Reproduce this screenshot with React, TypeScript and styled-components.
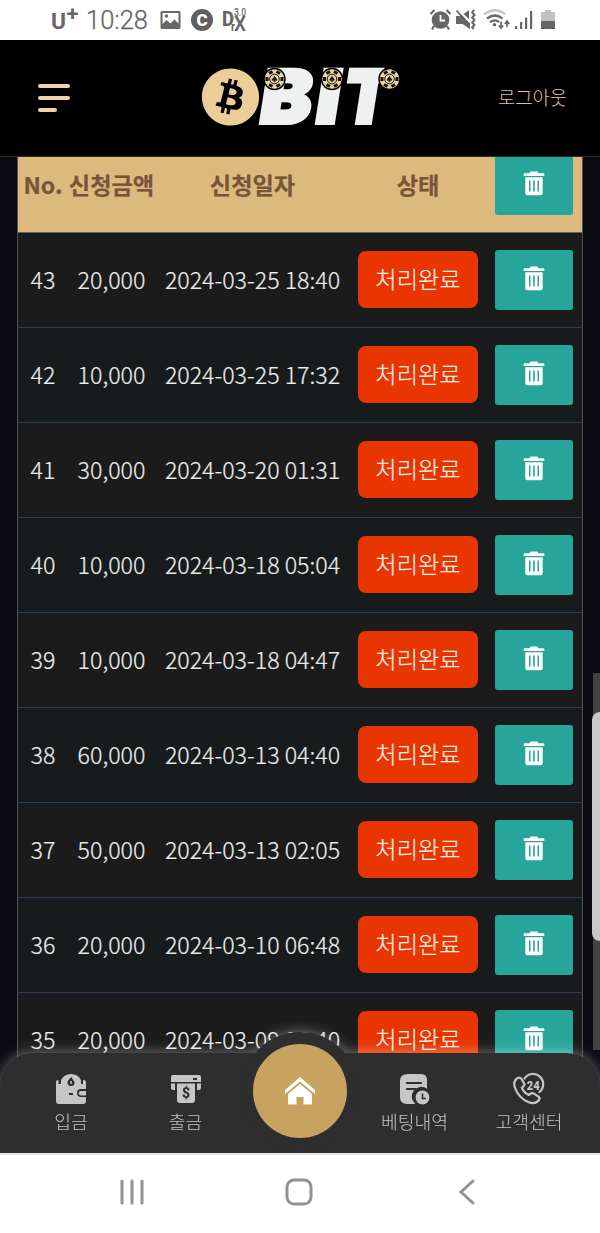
import React from 'react';
import styled, { createGlobalStyle } from 'styled-components';
import { FaBitcoin } from 'react-icons/fa';

const GlobalStyle = createGlobalStyle`
  * { box-sizing: border-box; }
  body { margin: 0; background: #fff; font-family: "Noto Sans CJK KR", "Noto Sans", sans-serif; }
  button { font: inherit; border: 0; padding: 0; background: none; color: inherit; }
  svg { display: block; flex: none; overflow: visible; }
`;

const Phone = styled.div`
  width: 600px;
  height: 1233px;
  display: flex;
  flex-direction: column;
  overflow: hidden;
`;

const StatusBar = styled.div`
  height: 40px;
  flex: none;
  display: flex;
  justify-content: space-between;
  padding: 0 44px 0 51px;
  color: #666;
`;

const StatusGroup = styled.div`
  display: flex;
  align-items: center;
`;

const Clock = styled.span`
  font: 300 25.5px/40px Roboto, sans-serif;
  -webkit-text-stroke: 0.3px #666;
  width: 74px;
`;

const Header = styled.header`
  height: 116px;
  flex: none;
  display: grid;
  grid-template-columns: 202px 198px 1fr;
  align-items: center;
  background: #000;
`;

const MenuButton = styled.button`
  padding-left: 37.5px;
  display: flex;
  flex-direction: column;
  gap: 8px;
`;

const MenuLine = styled.span<{ $w: number }>`
  width: ${p => p.$w}px;
  height: 4px;
  border-radius: 2px;
  background: #ecd3a8;
`;

const Logout = styled.button`
  justify-self: end;
  padding: 0 33px 3px 0;
  font-size: 18.8px;
  font-weight: 300;
  color: #ddc59c;
`;

const Viewport = styled.main`
  height: 997px;
  flex: none;
  position: relative;
  overflow: hidden;
  background: #0b0a11;
  border-top: 1px solid #302b22;
`;

const Table = styled.div`
  margin: -19px 17px 0;
  width: 566px;
  border: solid #505154;
  border-width: 0 1px 0 1px;
`;

const Row = styled.div<{ $kind: 'head' | 'odd' | 'even' }>`
  height: 95px;
  display: grid;
  grid-template-columns: 50px 87px 195px 136px 96px;
  align-items: center;
  justify-items: center;
  white-space: nowrap;
  border-bottom: 1px solid ${p => (p.$kind === 'head' ? '#67635a' : '#2c3c55')};
  background: ${p => ({ head: '#dcb97d', odd: '#1b1b1b', even: '#171b1c' }[p.$kind])};
  color: ${p => (p.$kind === 'head' ? '#79543a' : '#ececec')};
  font-size: 23.2px;
  font-weight: ${p => (p.$kind === 'head' ? 700 : 300)};
`;

const Cell = styled.span`
  line-height: 32px;
  padding-bottom: 2px;
  -webkit-text-stroke: 0.2px currentColor;
`;

const Status = styled.span`
  width: 120px;
  height: 57px;
  border-radius: 8px;
  background: #e93500;
  color: #fff0e8;
  -webkit-text-stroke: 0.2px currentColor;
  line-height: 54px;
  text-align: center;
  margin-bottom: 1px;
`;

const DeleteButton = styled.button`
  width: 78px;
  height: 60px;
  border-radius: 3px;
  background: #27a59a;
  color: #fff;
  display: flex;
  align-items: center;
  justify-content: center;
  padding-bottom: 3px;
`;

const ScrollTrack = styled.div`
  position: absolute;
  right: 0;
  top: 516px;
  width: 7px;
  height: 377px;
  background: #424242;
`;

const ScrollThumb = styled.div`
  position: absolute;
  left: -1px;
  top: 39px;
  width: 16px;
  height: 229px;
  border-radius: 8px;
  background: #c9c9c9;
`;

const BottomNav = styled.nav`
  position: absolute;
  left: 0;
  right: 0;
  bottom: 0;
  height: 100px;
  border-radius: 34px 34px 0 0;
  background: #2e2e2e;
  display: grid;
  grid-template-columns: 142px 87px 142px 87px 142px;
  filter: drop-shadow(0 0 7px rgba(255, 255, 255, 0.42));
`;

const NavItem = styled.button`
  display: flex;
  flex-direction: column;
  align-items: center;
  padding-top: 20px;
  width: 100px;
  justify-self: center;
  color: #c6c6c6;
  font-size: 18.2px;
  font-weight: 300;
  line-height: 31px;
`;

const HomeRing = styled.div`
  width: 118px;
  height: 118px;
  margin-top: -21px;
  justify-self: center;
  border-radius: 50%;
  background: #2e2e2e;
  display: grid;
  place-items: center;
`;

const HomeButton = styled.button`
  width: 94px;
  height: 94px;
  margin-bottom: 1px;
  border-radius: 50%;
  background: #c8a25f;
  display: grid;
  place-items: center;
`;

const SystemNav = styled.div`
  height: 80px;
  flex: none;
  border-top: 2px solid #e4e4e4;
  background: #fff;
  display: grid;
  grid-template-columns: 131px 204px 131px;
  justify-content: start;
  justify-items: center;
  align-items: center;
  padding: 0 0 4px 66px;
`;

const CarrierMark = () => (
  <svg width="35" height="28" viewBox="0 0 35 28" fill="#666">
    <text x="0" y="22.5" fontFamily="Roboto, sans-serif" fontSize="22.5" fontWeight="700" textLength="15" lengthAdjust="spacingAndGlyphs">U</text>
    <text x="15.5" y="15" fontFamily="Roboto, sans-serif" fontSize="21" fontWeight="700" textLength="12" lengthAdjust="spacingAndGlyphs">+</text>
  </svg>
);

const Trash = () => (
  <svg width="22" height="25" viewBox="0 0 22 25" fill="currentColor">
    <path d="M8 .6h6q1 0 1 1v.7h5.500q.8 0 .8.8v2H.7v-2q0-.8.8-.8H7v-.7q0-1 1-1Z" />
    <path fillRule="evenodd" d="M2.300 6.300h17.400v15.900q0 2-2 2H4.300q-2 0-2-2ZM6 9.500v11h1.500v-11Zm4.200 0v11h1.600v-11Zm4.300 0v11H16v-11Z" />
  </svg>
);

const notches = [0, 60, 120, 180, 240, 300];

const Chip = ({ x }: { x: number }) => (
  <g transform={`translate(${x} 13)`}>
    <circle r="11.2" fill="#000" />
    <circle r="9.8" fill="#ecd3a8" />
    {notches.map(angle => (
      <path key={angle} d="M-2-9h4v3h-4Z" fill="#17130d" transform={`rotate(${angle + 30})`} />
    ))}
    <circle r="4.8" fill="none" stroke="#17130d" strokeWidth="1" />
    <path d="M0-3 2.700.5Q2.700 2.200.6 1.600L1.200 2.800h-2.400l.6-1.200Q-2.700 2.200-2.700.5Z" fill="#17130d" />
  </g>
);

const CoinFace = styled(FaBitcoin)`
  color: #ebcd98;
`;

const Logo = () => (
  <svg width="198" height="64" viewBox="0 0 198 64">
    <CoinFace x={-1} y={1.5} size={59} />
    <g fill="#eff1f1" stroke="#eff1f1" strokeWidth="4" fontFamily="Inter, sans-serif" fontWeight="900" fontSize="73">
      <text transform="translate(55.5 57) skewX(-9)" textLength="51" lengthAdjust="spacingAndGlyphs">B</text>
      <text transform="translate(111.5 57) skewX(-9)" textLength="23" lengthAdjust="spacingAndGlyphs">I</text>
      <g clipPath="url(#tee)">
        <text transform="translate(138.5 57) skewX(-9)" textLength="46" lengthAdjust="spacingAndGlyphs">T</text>
      </g>
    </g>
    <clipPath id="tee"><path d="M140-4h43.500l-11 68h-33Z" /></clipPath>
    <Chip x={72.5} />
    <Chip x={130} />
    <Chip x={187.5} />
  </svg>
);

const WalletIcon = () => (
  <svg width="32" height="33" viewBox="0 0 32 33">
    <path fill="currentColor" d="M1 9q0-2 2.500-2v4H6V7Q9 1 16 1t10 6v4h2V7q3 0 3 2v7h-5q-4 0-4 4t4 4h5v4q0 3-3 3H4q-3 0-3-3Z" />
    <path fill="currentColor" d="M26 18h5v4.500h-5a2.200 2.200 0 0 1 0-4.500Z" />
    <path d="M16.500 4q-4 3-4 5.500a3.500 3.500 0 0 0 7 0Q19.500 8 18 7Z" fill="#2e2e2e" />
    <path d="M16 8v3" stroke="currentColor" strokeWidth="1.500" />
    <path d="M14 21h4" stroke="#2e2e2e" strokeWidth="2" />
  </svg>
);

const WithdrawIcon = () => (
  <svg width="32" height="33" viewBox="0 0 32 33">
    <path fill="currentColor" fillRule="evenodd" d="M3 2h26q2 0 2 2v5H1V4q0-2 2-2Zm20 3v2h4V5Z" />
    <path fill="currentColor" d="M1 10.500h4V17H3q-2 0-2-2Zm26 0h4V15q0 2-2 2h-2ZM7 10.500h18V27q0 3-3 3H10q-3 0-3-3Z" />
    <text x="16" y="24.5" textAnchor="middle" fill="#2e2e2e" fontFamily="Roboto, sans-serif" fontSize="14" fontWeight="800">$</text>
  </svg>
);

const HistoryIcon = () => (
  <svg width="32" height="33" viewBox="0 0 32 33">
    <path fill="currentColor" d="M9 1h13q6 0 6 6v8.800A8.600 8.600 0 0 0 16.500 31H8q-7 0-7-7V8q0-7 8-7Z" />
    <path d="M8 10h14M8 16h8.500" stroke="#2e2e2e" strokeWidth="2.200" strokeLinecap="round" />
    <circle cx="23.5" cy="24.5" r="6.9" fill="currentColor" />
    <path d="M23.500 20.500v5h3.300" stroke="#2e2e2e" strokeWidth="1.600" fill="none" />
  </svg>
);

const SupportIcon = () => (
  <svg width="32" height="33" viewBox="0 0 32 33" fill="none" stroke="currentColor" strokeWidth="2.200" strokeLinejoin="round" strokeLinecap="round">
    <path d="M11.500 5.500a10.200 10.200 0 1 1 15 13.500" />
    <path d="M4 5.500q2.500-2 4.300.2l2.800 4.600q.9 1.800-.8 3.200l-1.500 1.200q2 5 7 7.300l2-1.500q1.600-1 3.200.1l4.500 3q2 1.700.3 3.700-3.800 4.500-10 2Q5.500 25 1.900 14.500-.2 8.500 4 5.500Z" />
    <text x="20.3" y="16.5" textAnchor="middle" fill="currentColor" stroke="none" fontFamily="Roboto, sans-serif" fontSize="12" fontWeight="900" textLength="13" lengthAdjust="spacingAndGlyphs">24</text>
  </svg>
);

const HomeIcon = () => (
  <svg width="32" height="28" viewBox="0 0 32 28" fill="#fff">
    <path d="M16 0 31 13v4L16 4.500 1 17v-4Z" />
    <path d="M16 7 28 17v10.500h-8.500V20h-7v7.500H4V17Z" />
  </svg>
);

const PictureIcon = () => (
  <svg width="21" height="20" viewBox="0 0 21 20" fill="#666">
    <path fillRule="evenodd" d="M2 1h17q1.500 0 1.500 1.500v15Q20.500 19 19 19H2Q.5 19 .5 17.500v-15Q.5 1 2 1Zm.5 2v11l4-4 4 3.500 4-4 4 4V3Z" />
    <circle cx="6.5" cy="6" r="1.7" />
  </svg>
);

const BadgeIcon = styled.span`
  width: 22px;
  height: 22px;
  margin: 0 9px 1px 10px;
  border-radius: 50%;
  background: #606060;
  color: #fff;
  font: 900 17px/22px Roboto, sans-serif;
  text-align: center;
`;

const DixIcon = () => (
  <svg width="26" height="28" viewBox="0 0 26 28" fill="#666" fontFamily="Roboto, sans-serif" fontWeight="700">
    <text x="0" y="20" fontSize="19.5" fontWeight="800" textLength="12" lengthAdjust="spacingAndGlyphs">D</text>
    <text x="12" y="9.5" fontSize="11" fontWeight="500" textLength="12" lengthAdjust="spacingAndGlyphs">3.0</text>
    <text x="9" y="25" fontSize="12" textLength="4" lengthAdjust="spacingAndGlyphs">r</text>
    <text x="12" y="25" fontSize="20" fontWeight="600" textLength="12" lengthAdjust="spacingAndGlyphs">X</text>
  </svg>
);

const DeviceIcons = () => (
  <svg width="128" height="24" viewBox="0 0 128 24" fill="#666">
    <circle cx="12.5" cy="12" r="8.8" />
    <path d="M12.500 7v5.500h4.500" fill="none" stroke="#fff" strokeWidth="1.800" />
    <path d="m2.500 6 4-4M22.500 6l-4-4M6 18l-2 3.500M19 18l2 3.500" stroke="#666" strokeWidth="2.200" />
    <path d="M28 8h4l2-.8 8 8.400V21l-7.500-5H28ZM41 2v9l-5.500-5Z" />
    <path d="m28.500 2.500 12.500 14" stroke="#666" strokeWidth="1.800" />
    <path d="m46 2-1.800 2.500L46.500 7l-2.300 2.500 2.300 2.500-2.300 2.500 2.300 2.500-2.300 2.300 1.500 1.700" fill="none" stroke="#666" strokeWidth="2" />
    <g fill="none" strokeWidth="2.200">
      <path d="M56 6.500q11-8.500 21.500 0" stroke="#c5c5c5" />
      <path d="M59 10.500q8-6 15.500 0M62 14.200q5-3.500 9 0" stroke="#666" />
    </g>
    <circle cx="66.5" cy="16.8" r="1.7" />
    <path d="M73 13.500v6m-2.200-2L73 20l2.200-2.500M79 19v-5m-2.200 2L79 13l2.200 3" fill="none" stroke="#666" strokeWidth="1.700" />
    <path d="M87 18h2.200v3H87ZM92 14h2.200v7H92ZM97 9.500h2.200V21H97ZM102 3h2.200v18H102Z" />
    <path d="M113 4h4V2h6v2h4v9h-14Z" fill="#c2c2c2" />
    <path d="M113 13h14v8h-14Z" />
  </svg>
);

const entries: [number, string, string][] = [
  [43, '20,000', '2024-03-25 18:40'],
  [42, '10,000', '2024-03-25 17:32'],
  [41, '30,000', '2024-03-20 01:31'],
  [40, '10,000', '2024-03-18 05:04'],
  [39, '10,000', '2024-03-18 04:47'],
  [38, '60,000', '2024-03-13 04:40'],
  [37, '50,000', '2024-03-13 02:05'],
  [36, '20,000', '2024-03-10 06:48'],
  [35, '20,000', '2024-03-09 06:40'],
];

export default function App() {
  return (
    <Phone>
      <GlobalStyle />
      <StatusBar>
        <StatusGroup>
          <CarrierMark />
          <Clock>10:28</Clock>
          <PictureIcon />
          <BadgeIcon>C</BadgeIcon>
          <DixIcon />
        </StatusGroup>
        <StatusGroup><DeviceIcons /></StatusGroup>
      </StatusBar>
      <Header>
        <MenuButton>
          <MenuLine $w={32} />
          <MenuLine $w={32} />
          <MenuLine $w={19} />
        </MenuButton>
        <Logo />
        <Logout>로그아웃</Logout>
      </Header>
      <Viewport>
        <Table>
          <Row $kind="head">
            <Cell>No.</Cell>
            <Cell>신청금액</Cell>
            <Cell>신청일자</Cell>
            <Cell>상태</Cell>
            <DeleteButton><Trash /></DeleteButton>
          </Row>
          {entries.map(([no, amount, date], i) => (
            <Row key={no} $kind={i % 2 ? 'even' : 'odd'}>
              <Cell>{no}</Cell>
              <Cell>{amount}</Cell>
              <Cell>{date}</Cell>
              <Status>처리완료</Status>
              <DeleteButton><Trash /></DeleteButton>
            </Row>
          ))}
        </Table>
        <ScrollTrack><ScrollThumb /></ScrollTrack>
        <BottomNav>
          <NavItem><WalletIcon />입금</NavItem>
          <NavItem><WithdrawIcon />출금</NavItem>
          <HomeRing><HomeButton><HomeIcon /></HomeButton></HomeRing>
          <NavItem><HistoryIcon />베팅내역</NavItem>
          <NavItem><SupportIcon />고객센터</NavItem>
        </BottomNav>
      </Viewport>
      <SystemNav>
        <svg width="26" height="26" viewBox="0 0 26 26" stroke="#929292" strokeWidth="3" strokeLinecap="round"><path d="M3 2v22M13 2v22M23 2v22" /></svg>
        <svg width="28" height="28" viewBox="0 0 28 28" fill="none" stroke="#929292" strokeWidth="3"><rect x="2" y="2" width="24" height="24" rx="7" /></svg>
        <svg width="18" height="26" viewBox="0 0 18 26" fill="none" stroke="#929292" strokeWidth="3" strokeLinecap="round"><path d="M15 2 3 13l12 11" /></svg>
      </SystemNav>
    </Phone>
  );
}
